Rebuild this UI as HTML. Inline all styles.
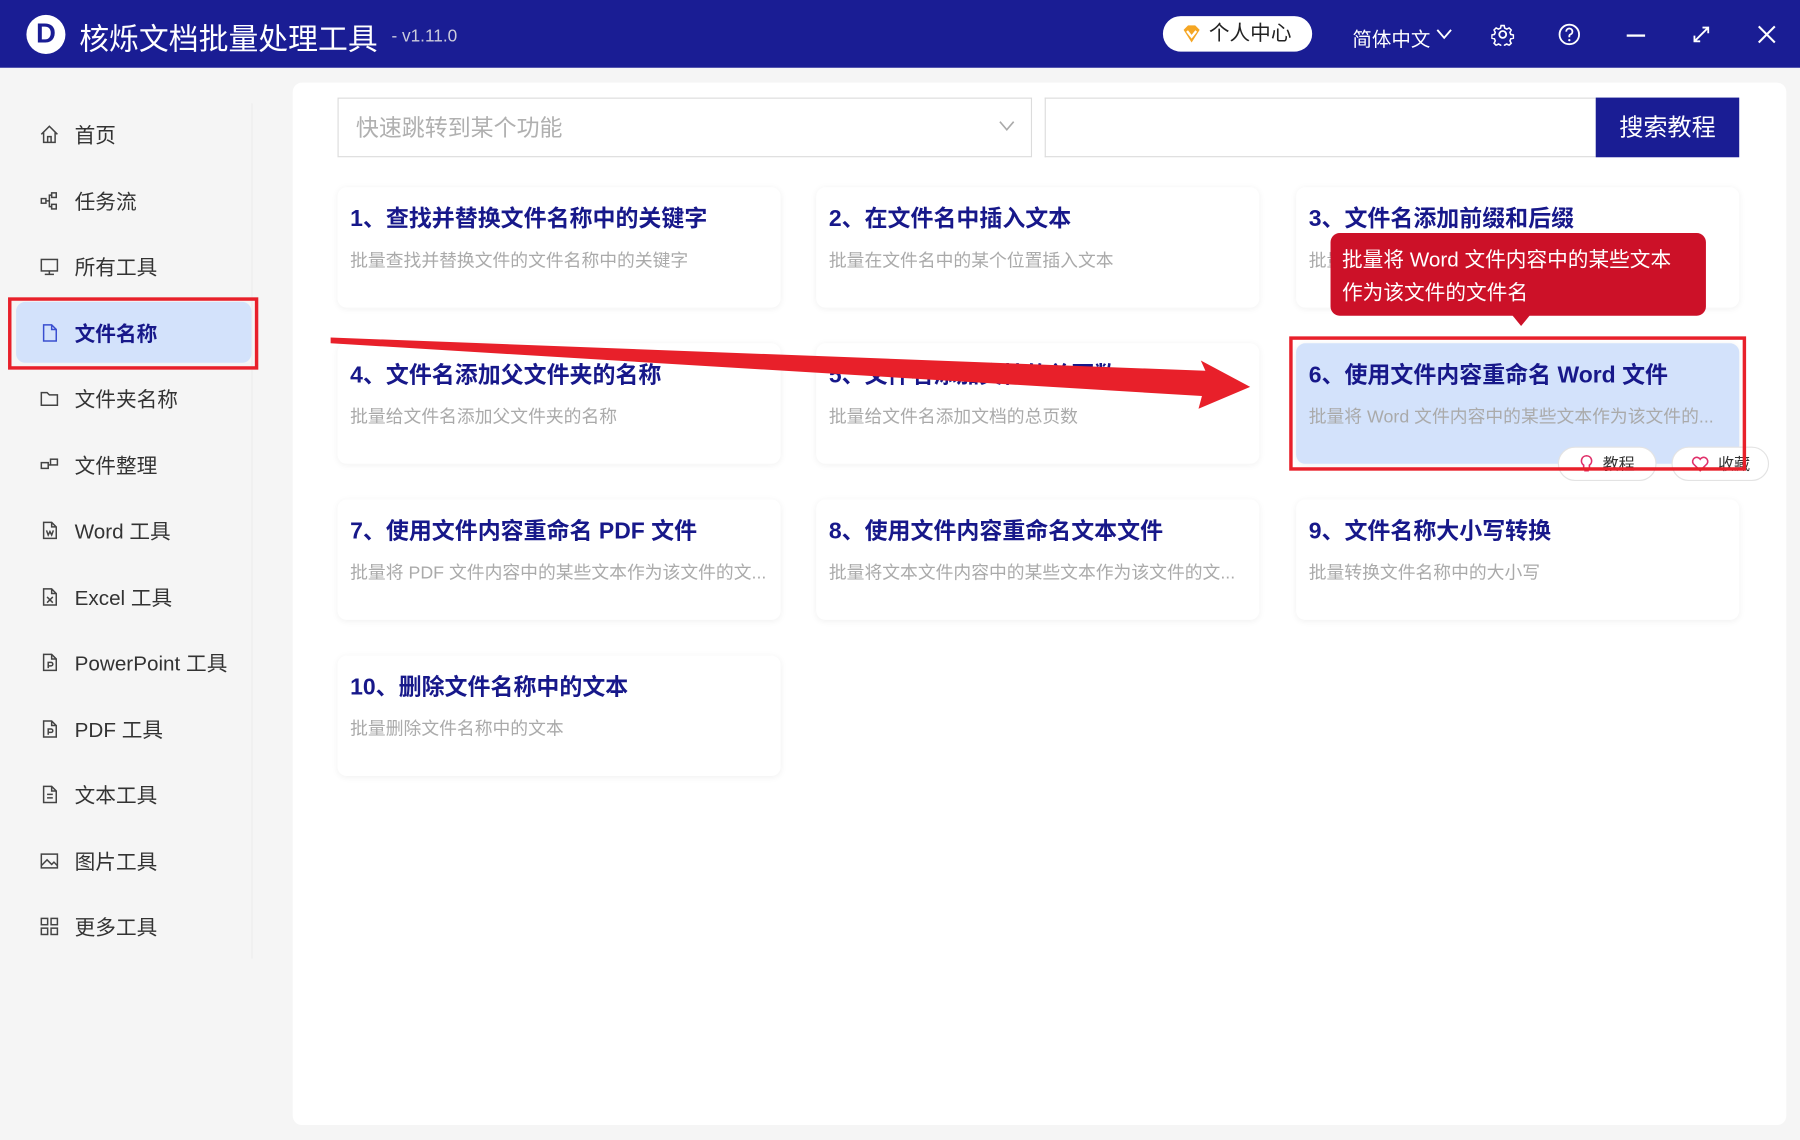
<!DOCTYPE html>
<html><head><meta charset="utf-8"><style>
*{box-sizing:border-box;margin:0;padding:0}
html,body{width:1800px;height:1140px;overflow:hidden;background:#f5f5f5}
#w{width:1568px;height:993px;transform:scale(1.148);transform-origin:0 0;position:relative;font-family:"Liberation Sans","Noto Sans CJK SC",sans-serif;background:#f5f5f5}
.a{position:absolute}
#tb{left:0;top:0;width:1568px;height:59px;background:#1a1d94;color:#fff}
.side{left:20px;width:200px;height:40px;font-size:18px;color:#333;display:flex;align-items:center}
.side svg{margin:0 13px 0 14px}
.card{position:absolute;width:386px;height:105px;background:#fff;border-radius:8px;box-shadow:0 1px 6px rgba(0,0,0,.06);padding:14px 11px}
.card h3{font-size:20px;color:#17188a;font-weight:bold;white-space:nowrap;line-height:28px}
.card p{font-size:15.5px;color:#aaa;margin-top:10px;white-space:nowrap;overflow:hidden;text-overflow:ellipsis}
.pill{position:absolute;height:30px;border:1px solid #e3e3e3;border-radius:15px;background:#fff;font-size:14px;color:#333;display:flex;align-items:center;justify-content:center;gap:8px}
</style></head><body><div id="w">
<div id="tb" class="a">
 <div class="a" style="left:23px;top:13px;width:34px;height:34px;border-radius:50%;background:#fff;color:#1a1d94;font-weight:bold;font-size:24px;text-align:center;line-height:34px">D</div>
 <div class="a" style="left:69px;top:14px;font-size:26px">核烁文档批量处理工具</div>
 <div class="a" style="left:341px;top:23px;font-size:15px;color:#ccd">- v1.11.0</div>
 <div class="a" style="left:1013px;top:14px;width:130px;height:31px;border-radius:16px;background:#fff;color:#222;font-size:18px;line-height:31px;padding-left:40px">个人中心</div>
 <svg class="a" style="left:1029px;top:22px" width="18" height="16" viewBox="0 0 18 16"><path d="M2 4 L6 0 H12 L16 4 L9 15 Z" fill="#f5a623"/><path d="M5 5 L9 10 L13 5" stroke="#fff" stroke-width="2" fill="none"/></svg>
 <div class="a" style="left:1178px;top:20px;font-size:17px">简体中文</div>
 <svg class="a" style="left:1251px;top:25px" width="14" height="10"><path d="M1 1 L7 8 L13 1" stroke="#fff" stroke-width="1.6" fill="none"/></svg>
 <svg class="a" style="left:1299px;top:20px" width="20" height="20" viewBox="0 0 20 20"><circle cx="10" cy="10" r="3" stroke="#fff" stroke-width="1.6" fill="none"/><path d="M8.5 1.5h3l.5 2.5 2 1 2.3-1.2 2 2-1.2 2.3.8 2 2.6.6v3l-2.6.6-.8 2 1.2 2.3-2 2-2.3-1.2-2 1-.5 2.5h-3l-.5-2.5-2-1-2.3 1.2-2-2 1.2-2.3-.8-2-2.6-.6v-3l2.6-.6.8-2-1.2-2.3 2-2 2.3 1.2 2-1z" transform="scale(.9) translate(1 1)" stroke="#fff" stroke-width="1.5" fill="none"/></svg>
 <svg class="a" style="left:1357px;top:20px" width="20" height="20"><circle cx="10" cy="10" r="8.5" stroke="#fff" stroke-width="1.6" fill="none"/><path d="M7.3 7.5a2.7 2.7 0 1 1 3.5 2.6c-.6.3-.8.7-.8 1.4v1" stroke="#fff" stroke-width="1.6" fill="none"/><circle cx="10" cy="15" r="1" fill="#fff"/></svg>
 <div class="a" style="left:1417px;top:30px;width:16px;height:2px;background:#fff"></div>
 <svg class="a" style="left:1474px;top:22px" width="16" height="16"><path d="M2 14 L14 2 M9 2 H14 V7 M2 9 V14 H7" stroke="#fff" stroke-width="1.6" fill="none"/></svg>
 <svg class="a" style="left:1531px;top:22px" width="16" height="16"><path d="M1 1 L15 15 M15 1 L1 15" stroke="#fff" stroke-width="1.8"/></svg>
</div>
<div class="a" style="left:219px;top:90px;width:1px;height:745px;background:#ececec"></div>
<div class="a" style="left:14px;top:263px;width:205px;height:53px;background:#d3e2fb;border-radius:8px"></div>
<div class="a" style="left:7px;top:259px;width:218px;height:63px;border:3px solid #e8202a"></div>
<div id="sb"></div>
<div class="a" style="left:255px;top:72px;width:1301px;height:908px;background:#fff;border-radius:8px"></div>
<div class="a" style="left:294px;top:85px;width:605px;height:52px;border:1px solid #dcdcdc;font-size:20px;color:#b0b0b0;line-height:52px;padding-left:15px">快速跳转到某个功能</div>
<svg class="a" style="left:870px;top:105px" width="14" height="10"><path d="M1 1 L7 8 L13 1" stroke="#aaa" stroke-width="1.4" fill="none"/></svg>
<div class="a" style="left:910px;top:85px;width:480px;height:52px;border:1px solid #dcdcdc;border-right:none"></div>
<div class="a" style="left:1390px;top:85px;width:125px;height:52px;background:#1a1d94;color:#fff;font-size:21px;line-height:54px;text-align:center">搜索教程</div>

<div class="card" style="left:294px;top:163px"><h3>1、查找并替换文件名称中的关键字</h3><p>批量查找并替换文件的文件名称中的关键字</p></div>
<div class="card" style="left:711px;top:163px"><h3>2、在文件名中插入文本</h3><p>批量在文件名中的某个位置插入文本</p></div>
<div class="card" style="left:1129px;top:163px"><h3>3、文件名添加前缀和后缀</h3><p>批量给文件名添加前缀和后缀</p></div>
<div class="card" style="left:294px;top:299px"><h3>4、文件名添加父文件夹的名称</h3><p>批量给文件名添加父文件夹的名称</p></div>
<div class="card" style="left:711px;top:299px"><h3>5、文件名添加文档的总页数</h3><p>批量给文件名添加文档的总页数</p></div>
<div class="card" style="left:1129px;top:299px;background:#d3e2fb"><h3>6、使用文件内容重命名 Word 文件</h3><p>批量将 Word 文件内容中的某些文本作为该文件的...</p></div>
<div class="card" style="left:294px;top:435px"><h3>7、使用文件内容重命名 PDF 文件</h3><p>批量将 PDF 文件内容中的某些文本作为该文件的文...</p></div>
<div class="card" style="left:711px;top:435px"><h3>8、使用文件内容重命名文本文件</h3><p>批量将文本文件内容中的某些文本作为该文件的文...</p></div>
<div class="card" style="left:1129px;top:435px"><h3>9、文件名称大小写转换</h3><p>批量转换文件名称中的大小写</p></div>
<div class="card" style="left:294px;top:571px"><h3>10、删除文件名称中的文本</h3><p>批量删除文件名称中的文本</p></div>

<div class="pill" style="left:1357px;top:389px;width:86px"><svg width="12" height="16"><path d="M6 1a4.5 4.5 0 0 0-2.5 8.2V12h5V9.2A4.5 4.5 0 0 0 6 1zM4 14h4" stroke="#e0306a" stroke-width="1.4" fill="none"/></svg>教程</div>
<div class="pill" style="left:1456px;top:389px;width:85px"><svg width="16" height="14"><path d="M8 13 L2 7a3.3 3.3 0 0 1 6-4 3.3 3.3 0 0 1 6 4z" stroke="#e0306a" stroke-width="1.4" fill="none"/></svg>收藏</div>
<div class="a" style="left:1123px;top:293px;width:398px;height:117px;border:3px solid #e8202a"></div>

<div class="a" style="left:1159px;top:203px;width:327px;height:72px;background:#cc1128;border-radius:8px;color:#fff;font-size:18px;line-height:29px;padding:9px 10px">批量将 Word 文件内容中的某些文本<br>作为该文件的文件名</div>
<div class="a" style="left:1316px;top:273px;width:0;height:0;border-left:9px solid transparent;border-right:9px solid transparent;border-top:11px solid #cc1128"></div>

<svg class="a" style="left:0;top:0" width="1568" height="993"><path d="M288 294 L1050 323 L1046 314 L1089 337 L1044 356 L1047 345 L288 299 Z" fill="#e8202a"/></svg>
</div>
<script>
var P={
home:'<path d="M2 9 L9 2 L16 9 M4 7.5 V16 H14 V7.5 M7.5 16 V11 H10.5 V16"/>',
flow:'<rect x="2" y="7" width="4" height="4"/><rect x="11" y="2" width="4" height="4"/><rect x="11" y="12" width="4" height="4"/><path d="M6 9 H9 V4 H11 M9 9 V14 H11"/>',
mon:'<rect x="2" y="3" width="14" height="10"/><path d="M9 13 V16 M5 16 H13"/>',
file:'<path d="M4 2 H11 L15 6 V16 H4 Z M11 2 V6 H15"/>',
folder:'<path d="M2 4 H7 L9 6 H16 V15 H2 Z"/>',
org:'<rect x="2" y="7" width="6" height="5"/><rect x="10" y="4" width="6" height="5"/><path d="M8 9 H10"/>',
fw:'<path d="M4 2 H11 L15 6 V16 H4 Z M11 2 V6 H15"/><path d="M6.5 9 L8 13 L9.5 10 L11 13 L12.5 9"/>',
fx:'<path d="M4 2 H11 L15 6 V16 H4 Z M11 2 V6 H15"/><path d="M7 9 L12 14 M12 9 L7 14"/>',
fp:'<path d="M4 2 H11 L15 6 V16 H4 Z M11 2 V6 H15"/><path d="M8 14 V9 H10.5 A1.5 1.5 0 0 1 10.5 12 H8"/>',
ft:'<path d="M4 2 H11 L15 6 V16 H4 Z M11 2 V6 H15"/><path d="M7 9 H12 M7 12 H12"/>',
img:'<rect x="2" y="3" width="14" height="12"/><path d="M2 13 L7 8 L11 12 L13 10 L16 13"/>',
grid:'<rect x="2" y="2" width="5.5" height="5.5"/><rect x="10.5" y="2" width="5.5" height="5.5"/><rect x="2" y="10.5" width="5.5" height="5.5"/><rect x="10.5" y="10.5" width="5.5" height="5.5"/>'};
var items=[["首页",117,"home"],["任务流",175,"flow"],["所有工具",232,"mon"],["文件名称",290,"file"],["文件夹名称",347,"folder"],["文件整理",405,"org"],["Word 工具",462,"fw"],["Excel 工具",520,"fx"],["PowerPoint 工具",577,"fp"],["PDF 工具",635,"fp"],["文本工具",692,"ft"],["图片工具",750,"img"],["更多工具",807,"grid"]];
var h="";items.forEach(function(it,i){var act=i==3;h+='<div class="a side" style="top:'+(it[1]-20)+'px;'+(act?'color:#17188a;font-weight:bold':'')+'"><svg width="18" height="18" viewBox="0 0 18 18" fill="none" stroke="'+(act?'#3a4fd0':'#444')+'" stroke-width="1.3">'+P[it[2]]+'</svg>'+it[0]+'</div>'});
document.getElementById("sb").outerHTML=h;
</script>
</body></html>
